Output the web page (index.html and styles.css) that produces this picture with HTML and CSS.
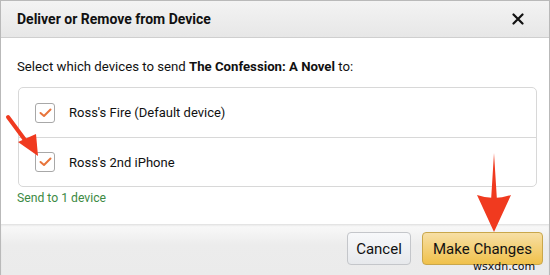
FILE: index.html
```html
<!DOCTYPE html>
<html>
<head>
<meta charset="utf-8">
<link rel="stylesheet" href="styles.css">
</head>
<body>
<div class="dialog">
  <header class="head">
    <h1 class="title">Deliver or Remove from Device</h1>
    <svg class="close" width="12" height="12" viewBox="0 0 12 12"><path d="M1.5 1.5L10.5 10.5M10.5 1.5L1.5 10.5" stroke="#111" stroke-width="2.2" stroke-linecap="round"/></svg>
  </header>
  <main class="body">
    <p class="lead">Select which devices to send <b>The Confession: A Novel</b> to:</p>
    <ul class="devices">
      <li class="device"><span class="box"><svg width="13" height="10" viewBox="0 0 13 10"><path d="M1.5 5L5 8L11.5 1.5" fill="none" stroke="#e8743b" stroke-width="2" stroke-linecap="round" stroke-linejoin="round"/></svg></span>Ross's Fire (Default device)</li>
      <li class="device"><span class="box"><svg width="13" height="10" viewBox="0 0 13 10"><path d="M1.5 5L5 8L11.5 1.5" fill="none" stroke="#e8743b" stroke-width="2" stroke-linecap="round" stroke-linejoin="round"/></svg></span>Ross's 2nd iPhone</li>
    </ul>
    <p class="count">Send to 1 device</p>
  </main>
  <footer class="foot">
    <button class="btn cancel">Cancel</button>
    <button class="btn primary">Make Changes</button>
  </footer>
  <svg class="arrow arrow-a" width="40" height="45" viewBox="0 0 40 45"><path d="M3 3L20 26" stroke="#f03a1f" stroke-width="4" stroke-linecap="round"/><path d="M13 28L31 20L33 42Z" fill="#f03a1f"/></svg>
  <svg class="arrow arrow-b" width="40" height="85" viewBox="0 0 40 85"><path d="M20 2L17 50L23 50Z" fill="#f03a1f"/><path d="M3 44Q20 50 37 44L20 81Z" fill="#f03a1f"/></svg>
  <span class="mark">wsxdn.com</span>
</div>
</body>
</html>
```
FILE: styles.css
```css
* { box-sizing: border-box; }
html, body { margin: 0; padding: 0; }
body { width: 550px; height: 275px; overflow: hidden; background: #fff; font-family: Roboto, "Liberation Sans", sans-serif; color: #111; }
.dialog { position: relative; width: 550px; height: 275px; border: 1px solid #b9b9b9; border-bottom: none; display: flex; flex-direction: column; }
.head { height: 37px; flex: none; background: linear-gradient(#f3f3f3, #e7e7e7); border-bottom: 1px solid #cfcfcf; display: flex; align-items: center; justify-content: space-between; padding: 0 25px 0 16px; }
.title { margin: 0; font-size: 14px; font-weight: 700; color: #111; white-space: nowrap; }
.close { display: block; }
.body { flex: 1; padding: 20px 12px 0 16px; }
.lead { margin: 0; font-size: 13.2px; line-height: 18px; color: #111; white-space: nowrap; }
.lead b { font-weight: 700; }
.devices { list-style: none; margin: 11px 0 0 1px; padding: 0; border: 1px solid #d8d8d8; border-radius: 5px; }
.device { height: 49px; display: flex; align-items: center; font-size: 13px; color: #111; padding-left: 16px; }
.device + .device { border-top: 1px solid #d8d8d8; }
.box { width: 20px; height: 20px; border: 1px solid #a8a8a8; border-radius: 3px; display: flex; align-items: center; justify-content: center; margin-right: 14px; background: #fff; }
.box svg { display: block; }
.count { margin: 3px 0 0; font-size: 12.2px; color: #3d8a44; line-height: 16px; }
.foot { height: 51px; flex: none; background: linear-gradient(#f9f9f9, #ececec 40%, #ebebeb); border-top: 1px solid #e4e4e4; box-shadow: inset 0 1px 2px rgba(0,0,0,0.06); display: flex; justify-content: flex-end; align-items: center; gap: 11px; padding: 0 6px 3px 0; }
.btn { height: 33px; border-radius: 4px; font-family: inherit; font-size: 15px; color: #111; padding: 0; white-space: nowrap; }
.cancel { width: 64px; background: linear-gradient(#f7f8fa, #e7e9ec); border: 1px solid #c4c6ca; }
.primary { width: 121px; background: linear-gradient(#f7dfa5, #f0c14b); border: 1px solid #c9a74b; }
.arrow { position: absolute; }
.arrow-a { left: 4px; top: 113px; }
.arrow-b { left: 473px; top: 150px; }
.mark { position: absolute; left: 472px; top: 259px; font-size: 11px; line-height: 13px; color: #111; font-family: "DejaVu Sans", sans-serif; }
```
